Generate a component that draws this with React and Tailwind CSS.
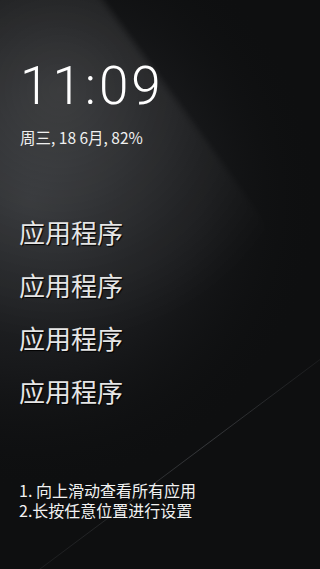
import React from 'react';

const cjk = "font-['Noto_Sans_CJK_SC','Noto_Sans',sans-serif]";

function Backdrop() {
  return (
    <svg className="absolute inset-0 w-full h-full" viewBox="0 0 320 569" preserveAspectRatio="none">
      <defs>
        <radialGradient id="soft" cx="30" cy="200" r="290" gradientUnits="userSpaceOnUse">
          <stop offset="0" stopColor="#2c2e31" />
          <stop offset="0.6" stopColor="#17181a" />
          <stop offset="1" stopColor="#0e0f10" stopOpacity="0" />
        </radialGradient>
        <radialGradient id="fade" cx="60" cy="90" r="260" gradientUnits="userSpaceOnUse">
          <stop offset="0" stopColor="#fff" />
          <stop offset="0.5" stopColor="#777" />
          <stop offset="1" stopColor="#000" />
        </radialGradient>
        <mask id="m" maskUnits="userSpaceOnUse" x="0" y="0" width="320" height="569">
          <rect width="320" height="569" fill="url(#fade)" />
        </mask>
        <linearGradient id="line" x1="320" y1="360" x2="40" y2="570" gradientUnits="userSpaceOnUse">
          <stop offset="0" stopColor="#2e3033" stopOpacity="0.4" />
          <stop offset="0.4" stopColor="#36383b" />
          <stop offset="1" stopColor="#2a2c2e" stopOpacity="0.5" />
        </linearGradient>
        <filter id="blur" x="-20%" y="-20%" width="140%" height="140%">
          <feGaussianBlur stdDeviation="3" />
        </filter>
      </defs>
      <rect width="320" height="569" fill="#0e0f10" />
      <rect width="320" height="569" fill="url(#soft)" />
      <g mask="url(#m)">
        <polygon points="-20,-20 88,-20 345,330 -20,600" fill="#ffffff" fillOpacity="0.13" filter="url(#blur)" />
      </g>
      <line x1="330" y1="352" x2="36" y2="572" stroke="url(#line)" strokeWidth="1" />
    </svg>
  );
}

export default function App() {
  return (
    <div className="relative w-[320px] h-[569px] overflow-hidden bg-[#0e0f10] text-[#f2f2f2]">
      <Backdrop />
      <div className="relative flex flex-col pl-[20px]">
        {/* Clock */}
        <div className="mt-[60px] font-['Roboto',sans-serif] font-light text-[53px] leading-none tracking-[3px] text-white">
          11:09
        </div>
        <div className={`mt-[14px] text-[15.5px] leading-[20px] text-[#f0f0f0] ${cjk}`}>
          周三, 18 6月, 82%
        </div>

        {/* App shortcuts */}
        <div className={`mt-[58px] flex flex-col ${cjk}`}>
          {[0, 1, 2, 3].map((i) => (
            <div
              key={i}
              className="h-[53px] text-[26px] leading-[53px] -ml-[1px] text-[#e6e6e6] [text-shadow:1px_1px_1px_#000]"
            >
              应用程序
            </div>
          ))}
        </div>

        {/* Hints */}
        <p className={`mt-[63px] -ml-[1px] text-[16px] leading-[20px] text-[#f2f2f2] ${cjk}`}>
          1. 向上滑动查看所有应用
          <br />
          2.长按任意位置进行设置
        </p>
      </div>
    </div>
  );
}
